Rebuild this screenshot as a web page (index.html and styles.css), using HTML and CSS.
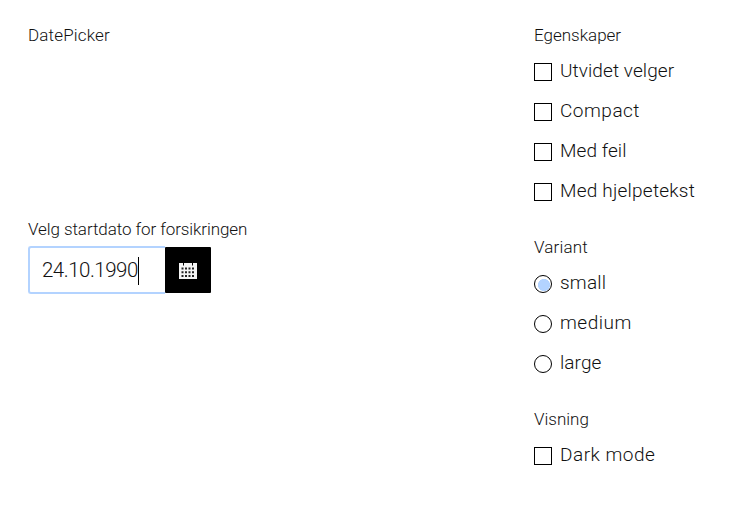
FILE: index.html
```
<!DOCTYPE html>
<html lang="no">
<head>
<meta charset="utf-8">
<title>DatePicker</title>
<link rel="stylesheet" href="styles.css">
</head>
<body>
<div class="example">
  <main class="preview">
    <h1 class="heading title">DatePicker</h1>
    <div class="datepicker">
      <div class="label">Velg startdato for forsikringen</div>
      <div class="control">
        <div class="input"><span class="value">24.10.1990</span><span class="caret"></span></div>
        <button class="toggle" aria-label="Kalender">
          <svg class="calendar" viewBox="0 0 18 16" width="18" height="16">
            <path fill="#f4f4f4" d="M0 0H4V2.5H5V0H13V2.5H14V0H18V16H0Z"/>
            <path stroke="#222" stroke-width="2" stroke-dasharray="2 1.5" d="M2.5 5.5H15.5M2.5 9.2H15.5M2.5 12.9H15.5"/>
          </svg>
        </button>
      </div>
    </div>
  </main>
  <aside class="options">
    <section class="group">
      <h2 class="heading">Egenskaper</h2>
      <div class="option"><i class="box"></i><span>Utvidet velger</span></div>
      <div class="option"><i class="box"></i><span class="wide">Compact</span></div>
      <div class="option"><i class="box"></i><span>Med feil</span></div>
      <div class="option"><i class="box"></i><span class="roomy">Med hjelpetekst</span></div>
    </section>
    <section class="group">
      <h2 class="heading variant">Variant</h2>
      <div class="option"><i class="radio checked"></i><span class="roomy">small</span></div>
      <div class="option"><i class="radio"></i><span class="wide">medium</span></div>
      <div class="option"><i class="radio"></i><span>large</span></div>
    </section>
    <section class="group">
      <h2 class="heading">Visning</h2>
      <div class="option"><i class="box"></i><span class="wide">Dark mode</span></div>
    </section>
  </aside>
</div>
</body>
</html>
```
FILE: styles.css
```
* { box-sizing: border-box; }
body {
  margin: 0;
  background: #fff;
  color: #111;
  font-family: Roboto, "Liberation Sans", sans-serif;
  font-weight: 300;
}
.example {
  display: grid;
  grid-template-columns: 506px 1fr;
  padding: 23px 28px 0;
  height: 512px;
}
.heading, .label {
  margin: 0;
  font-size: 17px;
  font-weight: 300;
  line-height: 24px;
  white-space: nowrap;
}
.title, .variant { letter-spacing: 0.17px; }
.label { letter-spacing: -0.08px; }
.datepicker { margin-top: 170px; }
.control { display: flex; width: 183px; height: 48px; margin-top: 5px; }
.input {
  display: flex;
  align-items: center;
  width: 137px;
  border: 2px solid #b3d3ff;
  border-right: 0;
  border-radius: 3px 0 0 3px;
  padding-left: 12px;
  font-size: 20.5px;
  letter-spacing: -0.5px;
  white-space: nowrap;
}
.caret { width: 1px; height: 28px; margin-top: 1px; background: #000; }
.toggle {
  display: grid;
  place-items: center;
  width: 46px;
  height: 46px;
  margin: 1px 0;
  padding: 2px 0 0;
  border: 0;
  border-radius: 1px;
  background: #000;
}
.calendar { display: block; }
.group { margin-bottom: 24px; }
.group .heading { margin-bottom: 4px; }
.option {
  display: flex;
  align-items: flex-start;
  height: 40px;
  font-size: 19px;
  line-height: 40px;
  letter-spacing: 0.08px;
  white-space: nowrap;
}
.wide { letter-spacing: 0.5px; }
.roomy { letter-spacing: 0.22px; }
.box, .radio {
  flex: none;
  width: 18px;
  height: 18px;
  margin: 12px 8px 0 0;
  border: 1px solid #000;
}
.radio { border-radius: 50%; }
.checked { background: radial-gradient(circle at 9px 9px, #b3d3ff 5.8px, transparent 6.3px); }
```
